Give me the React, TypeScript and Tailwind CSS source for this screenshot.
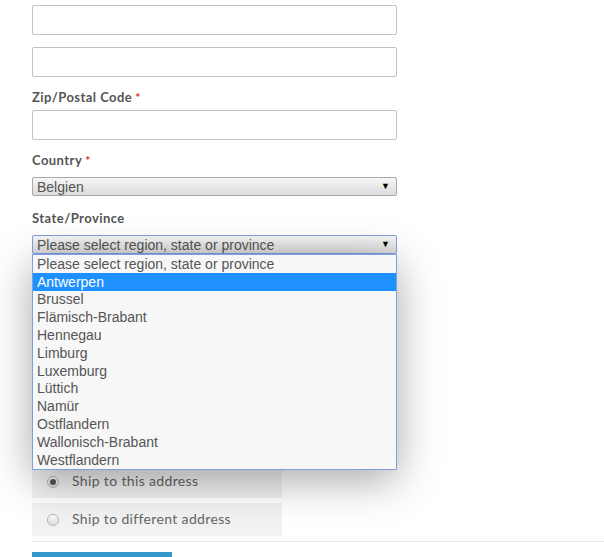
import React from "react";

const regions = [
  "Please select region, state or province",
  "Antwerpen",
  "Brussel",
  "Flämisch-Brabant",
  "Hennegau",
  "Limburg",
  "Luxemburg",
  "Lüttich",
  "Namür",
  "Ostflandern",
  "Wallonisch-Brabant",
  "Westflandern",
];

function Label({ text, req }: { text: string; req?: boolean }) {
  return (
    <div className="h-[20px] flex items-center text-[13px] font-bold text-[#555] font-['Lato',sans-serif] tracking-[0.45px]">
      {text}
      {req && <span className="text-[#e02b27] ml-[3px] text-[12px]">*</span>}
    </div>
  );
}

function Input() {
  return <div className="h-[30px] w-full border border-[#c2c2c2] rounded-[2px] bg-white" />;
}

function Select({ text, focus }: { text: string; focus?: boolean }) {
  return (
    <div
      className={`h-[19px] w-full rounded-[2px] border flex items-center justify-between pl-[4px] pr-[6px] bg-gradient-to-b from-[#f6f6f6] to-[#dcdcdc] font-['Liberation_Sans',Arial,sans-serif] text-[14px] text-[#555] ${
        focus ? "border-[#7f9fe0]" : "border-[#a9a9a9]"
      }`}
    >
      <span className="leading-none">{text}</span>
      <span className="text-[9px] text-black leading-none">▼</span>
    </div>
  );
}

function Radio({ checked, text }: { checked?: boolean; text: string }) {
  return (
    <div className="w-[250px] h-[33px] bg-[#f2f2f2] flex items-center pl-[15px]">
      <span className="w-[12px] h-[12px] rounded-full border border-[#b5b5b5] bg-gradient-to-b from-[#fdfdfd] to-[#dedede] flex items-center justify-center">
        {checked && <span className="w-[6px] h-[6px] rounded-full bg-[#555]" />}
      </span>
      <span className="ml-[13px] mb-[2px] text-[14px] text-[#666] font-['Lato',sans-serif] tracking-[0.35px]">{text}</span>
    </div>
  );
}

export default function App() {
  return (
    <div className="w-[604px] h-[557px] bg-white overflow-hidden relative">
      <div className="w-[365px] ml-[32px] pt-[5px]">
        <Input />
        <div className="mt-[12px]">
          <Input />
        </div>
        <div className="mt-[11px]">
          <Label text="Zip/Postal Code" req />
        </div>
        <div className="mt-[2px]">
          <Input />
        </div>
        <div className="mt-[11px]">
          <Label text="Country" req />
        </div>
        <div className="mt-[6px]">
          <Select text="Belgien" />
        </div>
        <div className="mt-[13px]">
          <Label text="State/Province" />
        </div>
        <div className="mt-[6px] relative z-10">
          <Select text="Please select region, state or province" focus />
          <div className="absolute left-0 top-full w-full bg-[#f7f7f7] border border-[#7f9fe0] shadow-[0_10px_40px_rgba(0,0,0,0.35)] font-['Liberation_Sans',Arial,sans-serif] text-[14px] text-[#555]">
            {regions.map((r, i) => (
              <div
                key={r}
                className={`h-[17.8px] pl-[4px] flex items-center leading-none ${
                  i === 1 ? "bg-[#1e90ff] text-white" : ""
                }`}
              >
                {r}
              </div>
            ))}
          </div>
        </div>
        <div className="mt-[211px] flex flex-col gap-[5px]">
          <Radio checked text="Ship to this address" />
          <Radio text="Ship to different address" />
        </div>
      </div>
      <div className="ml-[32px] mt-[5px] h-[1px] bg-[#e8e8e8]" />
      <div className="ml-[32px] mt-[10px] w-[140px] h-[10px] bg-[#3399cc]" />
    </div>
  );
}
